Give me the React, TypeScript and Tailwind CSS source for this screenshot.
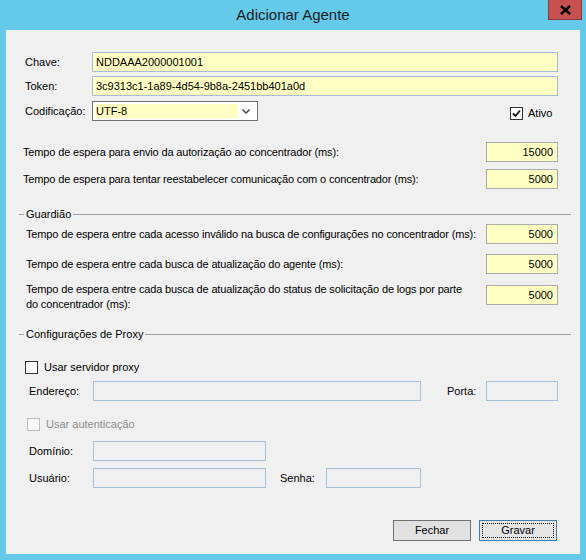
import React from 'react';

const font = { fontFamily: '"Liberation Sans", Arial, sans-serif' };

const TextBox = ({ value = '', w, tone = 'yellow', right = false }: { value?: string; w: string; tone?: 'yellow' | 'num' | 'off'; right?: boolean }) => {
  const cls =
    tone === 'yellow'
      ? 'bg-[#ffffc4] border-[#a9bcd6]'
      : tone === 'num'
      ? 'bg-[#ffffc4] border-[#acacac]'
      : 'bg-[#f0f0f0] border-[#a9bfdb]';
  return (
    <div className={`${w} h-[20px] shrink-0 border ${cls} flex items-center ${right ? 'justify-end pr-[4px]' : 'pl-[3px]'} text-[11px] text-black`}>
      {value}
    </div>
  );
};

const CheckBox = ({ checked = false, disabled = false }: { checked?: boolean; disabled?: boolean }) => (
  <div
    className={`w-[13px] h-[13px] shrink-0 border flex items-center justify-center ${
      disabled ? 'border-[#bcbcbc] bg-[#f7f7f7]' : 'border-[#333333] bg-white'
    }`}
  >
    {checked && (
      <svg width="9" height="9" viewBox="0 0 9 9">
        <path d="M1 4.5 L3.5 7 L8 1.5" fill="none" stroke="#111" strokeWidth="1.8" />
      </svg>
    )}
  </div>
);

const GroupHeader = ({ title }: { title: string }) => (
  <div className="h-[14px] flex items-center pl-[13px] pr-[9px]">
    <div className="w-[5px] border-t border-[#a0a0a0]" />
    <span className="px-[2px] leading-[14px]">{title}</span>
    <div className="flex-1 border-t border-[#a0a0a0]" />
  </div>
);

const TimeRow = ({ label, value, mt, pl }: { label: string; value: string; mt: string; pl: string }) => (
  <div className={`${mt} ${pl} pr-[22px] h-[20px] flex items-center justify-between`}>
    <span className="whitespace-nowrap tracking-[-0.15px]">{label}</span>
    <TextBox value={value} w="w-[72px]" tone="num" right />
  </div>
);

export default function App() {
  return (
    <div className="w-[586px] h-[560px] bg-[#65c9ea] flex flex-col text-[11px] text-black overflow-hidden" style={font}>
      {/* title bar */}
      <div className="h-[30px] grid grid-cols-[1fr_auto_1fr] items-start shrink-0">
        <div />
        <div className="text-[15px] text-[#1e1e1e] leading-[30px]">Adicionar Agente</div>
        <div className="justify-self-end mr-[4px] w-[34px] h-[20px] bg-[#c75050] border border-[#8e3b3b] border-t-0 flex items-center justify-center">
          <svg width="11" height="10" viewBox="0 0 11 10">
            <path d="M1 1 L10 9 M10 1 L1 9" stroke="#000" strokeWidth="2.4" />
          </svg>
        </div>
      </div>

      {/* client area */}
      <div className="ml-[6px] w-[574px] h-[524px] bg-[#f0f0f0] flex flex-col pt-[22px]">
        <div className="h-[20px] flex items-center pl-[19px]">
          <span className="w-[67px] shrink-0">Chave:</span>
          <TextBox value="NDDAAA2000001001" w="w-[466px]" />
        </div>
        <div className="mt-[4px] h-[20px] flex items-center pl-[19px]">
          <span className="w-[67px] shrink-0">Token:</span>
          <TextBox value="3c9313c1-1a89-4d54-9b8a-2451bb401a0d" w="w-[466px]" />
        </div>
        <div className="mt-[5px] h-[20px] flex items-start pl-[19px]">
          <span className="w-[67px] shrink-0 leading-[20px]">Codificação:</span>
          <div className="w-[166px] h-[20px] border border-[#707070] bg-white flex items-center pl-[2px] pr-[3px]">
            <div className="w-[143px] h-[14px] bg-[#ffffc4] leading-[14px] pl-[1px]">UTF-8</div>
            <div className="flex-1 flex justify-center">
              <svg width="8" height="5" viewBox="0 0 8 5">
                <path d="M0.5 0.5 L4 4 L7.5 0.5" fill="none" stroke="#555" strokeWidth="1.6" />
              </svg>
            </div>
          </div>
          <div className="ml-[252px] mt-[4px] flex items-center gap-[5px]">
            <CheckBox checked />
            <span>Ativo</span>
          </div>
        </div>

        <TimeRow mt="mt-[21px]" pl="pl-[17px]" label="Tempo de espera para envio da autorização ao concentrador (ms):" value="15000" />
        <TimeRow mt="mt-[7px]" pl="pl-[17px]" label="Tempo de espera para tentar reestabelecer comunicação com o concentrador (ms):" value="5000" />

        <div className="mt-[18px]">
          <GroupHeader title="Guardião" />
        </div>
        <TimeRow mt="mt-[3px]" pl="pl-[20px]" label="Tempo de espera entre cada acesso inválido na busca de configurações no concentrador (ms):" value="5000" />
        <TimeRow mt="mt-[10px]" pl="pl-[20px]" label="Tempo de espera entre cada busca de atualização do agente (ms):" value="5000" />
        <div className="mt-[8px] pl-[20px] pr-[22px] h-[30px] flex items-start justify-between">
          <span className="leading-[15px] whitespace-nowrap tracking-[-0.15px]">
            Tempo de espera entre cada busca de atualização do status de solicitação de logs por parte
            <br />
            do concentrador (ms):
          </span>
          <div className="mt-[3px]">
            <TextBox value="5000" w="w-[72px]" tone="num" right />
          </div>
        </div>

        <div className="mt-[15px]">
          <GroupHeader title="Configurações de Proxy" />
        </div>
        <div className="mt-[19px] h-[14px] pl-[19px] flex items-center gap-[6px]">
          <CheckBox />
          <span>Usar servidor proxy</span>
        </div>
        <div className="mt-[7px] h-[20px] pl-[23px] flex items-center">
          <span className="w-[64px] shrink-0">Endereço:</span>
          <TextBox w="w-[328px]" tone="off" />
          <span className="ml-[26px] w-[39px] shrink-0">Porta:</span>
          <TextBox w="w-[72px]" tone="off" />
        </div>
        <div className="mt-[16px] h-[14px] pl-[21px] flex items-center gap-[6px] text-[#8d8d8d]">
          <CheckBox disabled />
          <span>Usar autenticação</span>
        </div>
        <div className="mt-[10px] h-[20px] pl-[23px] flex items-center">
          <span className="w-[64px] shrink-0">Domínio:</span>
          <TextBox w="w-[173px]" tone="off" />
        </div>
        <div className="mt-[7px] h-[20px] pl-[23px] flex items-center">
          <span className="w-[64px] shrink-0">Usuário:</span>
          <TextBox w="w-[173px]" tone="off" />
          <span className="ml-[14px] w-[46px] shrink-0">Senha:</span>
          <TextBox w="w-[95px]" tone="off" />
        </div>

        <div className="mt-[32px] pr-[23px] flex justify-end gap-[8px]">
          <button className="w-[78px] h-[21px] bg-[#e1e1e1] border border-[#707070] text-[11px] leading-none">Fechar</button>
          <button className="w-[78px] h-[21px] bg-[#e5e5e5] border border-[#3c7fb1] p-[2px]">
            <div className="w-full h-full border border-dotted border-black flex items-center justify-center text-[11px]">Gravar</div>
          </button>
        </div>
      </div>
    </div>
  );
}
